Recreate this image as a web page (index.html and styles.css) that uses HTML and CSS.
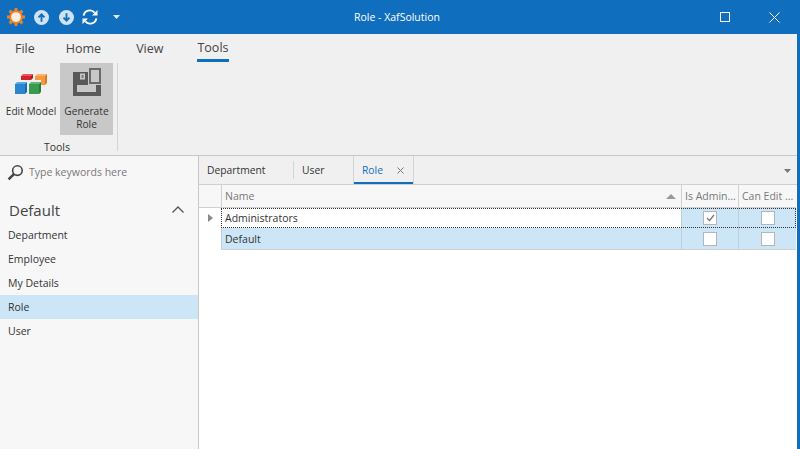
FILE: index.html
```html
<!DOCTYPE html>
<html lang="en">
<head>
<meta charset="utf-8">
<title>Role - XafSolution</title>
<link rel="stylesheet" href="styles.css">
</head>
<body>
<div class="window">
  <header class="titlebar">
    <div class="qat">
      <svg class="ic-app" width="18" height="18" viewBox="0 0 24 24"><g fill="#e9832a"><circle cx="12" cy="12" r="9"/><rect x="10" y="0" width="4" height="24"/><rect x="0" y="10" width="24" height="4"/><rect x="10" y="0" width="4" height="24" transform="rotate(45 12 12)"/><rect x="10" y="0" width="4" height="24" transform="rotate(-45 12 12)"/></g><circle cx="12" cy="12" r="6.500" fill="#fdeedd"/></svg>
      <svg class="ic-up" width="15" height="15" viewBox="0 0 16 16"><circle cx="8" cy="8" r="8" fill="#cfe3f5"/><path d="M8 12.500V5M4.800 7.800 8 4.600l3.200 3.200" fill="none" stroke="#106ebe" stroke-width="2"/></svg>
      <svg class="ic-down" width="15" height="15" viewBox="0 0 16 16"><circle cx="8" cy="8" r="8" fill="#cfe3f5"/><path d="M8 3.500V11M4.800 8.200 8 11.400l3.200-3.200" fill="none" stroke="#106ebe" stroke-width="2"/></svg>
      <svg class="ic-sync" width="16" height="16" viewBox="0 0 16 16"><path d="M1.600 6.600A6.300 6.300 0 0 1 12.600 3.600M14.400 9.400A6.300 6.300 0 0 1 3.400 12.400" fill="none" stroke="#fff" stroke-width="1.900"/><path d="M15.500 1v5.500H10zM.5 15V9.500H6z" fill="#fff"/></svg>
      <svg class="ic-drop" width="7" height="4" viewBox="0 0 7 4"><path d="M0 0h7L3.500 4z" fill="#dcebf8"/></svg>
    </div>
    <div class="title">Role - XafSolution</div>
    <div class="winbtns">
      <svg width="10" height="10" viewBox="0 0 10 10"><rect x=".5" y=".5" width="9" height="9" fill="none" stroke="#fff"/></svg>
      <svg width="11" height="11" viewBox="0 0 11 11"><path d="M.5.5l10 10M10.500.5l-10 10" stroke="#fff" fill="none"/></svg>
    </div>
  </header>
  <nav class="tabs">
    <span class="tab tab-file">File</span>
    <span class="tab tab-home">Home</span>
    <span class="tab tab-view">View</span>
    <span class="tab tab-tools">Tools</span>
  </nav>
  <section class="ribbon">
    <div class="group">
      <div class="group-items">
        <div class="rbtn rbtn-edit">
          <svg width="33" height="22" viewBox="0 0 33 22">
            <path d="M6 3l2-2h10l-2 2z" fill="#e8565c"/><path d="M6 3h10v4H6z" fill="#d2232c"/><path d="M16 3l2-2v4l-2 2z" fill="#a31a22"/>
            <path d="M20 3l2-2h10l-2 2z" fill="#f9b56c"/><path d="M20 3h10v9h-4V7h-6z" fill="#f4993f"/><path d="M30 3l2-2v9l-2 2z" fill="#d97c22"/>
            <path d="M0 11l2-2h10l-2 2z" fill="#55aae6"/><path d="M0 11h10v10H0z" fill="#2a86d0"/><path d="M10 11l2-2v10l-2 2z" fill="#1a6bae"/>
            <path d="M14 11l2-2h10l-2 2z" fill="#62b477"/><path d="M14 11h10v10H14z" fill="#3a9a50"/><path d="M24 11l2-2v10l-2 2z" fill="#2a7a3e"/>
          </svg>
          <span class="rlabel">Edit Model</span>
        </div>
        <div class="rbtn rbtn-gen">
          <svg width="28" height="28" viewBox="0 0 28 28">
            <path d="M0 4H15V17H4V24H23V17H28V28H0Z" fill="#595959"/>
            <rect x="7" y="5.500" width="5" height="6" fill="#c8c8c8"/>
            <rect x="8.500" y="7" width="2" height="3" fill="#7a7a7a"/>
            <rect x="17" y="1" width="10" height="14" fill="none" stroke="#6a6a6a" stroke-width="2"/>
          </svg>
          <span class="rlabel">Generate<br>Role</span>
        </div>
      </div>
      <div class="group-title">Tools</div>
    </div>
  </section>
  <main class="body">
    <aside class="side">
      <div class="search">
        <svg width="17" height="17" viewBox="0 0 16 16"><circle cx="9.800" cy="6.200" r="4.500" fill="none" stroke="#444" stroke-width="1.500"/><path d="M6.500 9.500 1.500 14.500" stroke="#444" stroke-width="2.400"/></svg>
        <span>Type keywords here</span>
      </div>
      <div class="navhead">
        <span>Default</span>
        <svg width="12" height="7" viewBox="0 0 12 7"><path d="M.5 6.500 6 1l5.500 5.500" fill="none" stroke="#555" stroke-width="1.300"/></svg>
      </div>
      <ul class="navlist">
        <li>Department</li>
        <li>Employee</li>
        <li>My Details</li>
        <li class="sel">Role</li>
        <li>User</li>
      </ul>
    </aside>
    <section class="content">
      <div class="doctabs">
        <span class="dt dt-dep">Department</span>
        <span class="dt dt-user">User</span>
        <span class="dt dt-role">Role<svg width="7" height="7" viewBox="0 0 7 7"><path d="M.5.5l6 6M6.500.5l-6 6" stroke="#777" fill="none"/></svg></span>
        <svg class="dt-more" width="7" height="4" viewBox="0 0 7 4"><path d="M0 0h7L3.500 4z" fill="#777"/></svg>
      </div>
      <div class="grid">
        <div class="row head">
          <div class="ind"></div>
          <div class="cells">
            <div class="c name">Name<svg width="10" height="5" viewBox="0 0 10 5"><path d="M0 5h10L5 0z" fill="#999"/></svg></div>
            <div class="c adm">Is Admin...</div>
            <div class="c edit">Can Edit ...</div>
          </div>
        </div>
        <div class="row r1">
          <div class="ind"><svg width="5" height="8" viewBox="0 0 5 8"><path d="M0 0l5 4-5 4z" fill="#8a8a8a"/></svg></div>
          <div class="cells">
            <div class="c name">Administrators</div>
            <div class="c adm"><span class="cb"><svg width="9" height="8" viewBox="0 0 9 8"><path d="M1 4l2.500 2.500L8 1" fill="none" stroke="#777" stroke-width="1.200"/></svg></span></div>
            <div class="c edit"><span class="cb"></span></div>
          </div>
        </div>
        <div class="row r2">
          <div class="ind"></div>
          <div class="cells">
            <div class="c name">Default</div>
            <div class="c adm"><span class="cb"></span></div>
            <div class="c edit"><span class="cb"></span></div>
          </div>
        </div>
      </div>
    </section>
  </main>
</div>
</body>
</html>
```
FILE: styles.css
```css
* { box-sizing: border-box; }
html, body { margin: 0; padding: 0; height: 100%; overflow: hidden; }
body { font-family: "Open Sans", "Liberation Sans", sans-serif; font-size: 10.5px; color: #333; }
.window { width: 800px; height: 449px; display: flex; flex-direction: column; background: #106ebe; }
.titlebar { height: 34px; flex: none; background: #106ebe; display: flex; align-items: center; position: relative; color: #fff; }
.qat { display: flex; align-items: center; padding-left: 7px; }
.ic-up { margin-left: 9px; }
.ic-down { margin-left: 10px; }
.ic-sync { margin-left: 8px; }
.ic-drop { margin-left: 15px; }
.title { position: absolute; left: 0; right: 6px; text-align: center; }
.winbtns { margin-left: auto; display: flex; align-items: center; gap: 39px; padding-right: 20px; }
.tabs { height: 28px; flex: none; margin-right: 3px; display: flex; align-items: center; font-size: 12.5px; color: #444; background: #f0f0f0; }
.tab { display: block; }
.tab-file { margin-left: 15px; }
.tab-home { margin-left: 31px; }
.tab-view { margin-left: 35px; }
.tab-tools { margin-left: 34px; height: 27px; line-height: 25px; border-bottom: 3px solid #106ebe; }
.ribbon { height: 94px; flex: none; margin-right: 3px; background: #f0f0f0; border-bottom: 1px solid #c8c8c8; padding-top: 1px; }
.group { width: 118px; height: 88px; border-right: 1px solid #d4d4d4; display: flex; flex-direction: column; }
.group-items { display: flex; gap: 1px; height: 72px; padding-left: 3px; }
.rbtn { display: flex; flex-direction: column; align-items: center; height: 72px; text-align: center; line-height: 13px; flex: none; font-size: 10.2px; }
.rbtn-edit { width: 56px; padding-top: 10px; }
.rbtn-gen { width: 53px; background: #c8c8c8; padding-top: 5px; }
.rlabel { display: block; white-space: nowrap; }
.rbtn-edit .rlabel { margin-top: 10px; }
.rbtn-gen .rlabel { margin-top: 9px; }
.group-title { text-align: center; line-height: 14px; margin-top: 5px; padding-right: 3px; }
.body { flex: 1; display: flex; min-height: 0; margin-right: 3px; background: #fff; }
.side { width: 199px; flex: none; background: #f7f7f7; border-right: 1px solid #c8c8c8; }
.search { height: 32px; display: flex; align-items: center; gap: 5px; padding-left: 7px; color: #777; }
.navhead { height: 35px; display: flex; align-items: center; justify-content: space-between; padding: 8px 14px 0 9px; font-size: 15px; color: #444; }
.navlist { list-style: none; margin: 0; padding: 0; }
.navlist li { height: 24px; line-height: 24px; padding-left: 8px; }
.navlist li.sel { background: #cde6f7; }
.content { flex: 1; min-width: 0; }
.doctabs { height: 29px; background: #f0f0f0; border-bottom: 1px solid #d0d0d0; display: flex; align-items: center; position: relative; font-size: 10.3px; }
.dt { display: flex; align-items: center; height: 28px; flex: none; }
.dt-dep { width: 94px; padding-left: 8px; }
.dt-user { width: 60px; padding-left: 8px; border-left: 1px solid #d4d4d4; height: 18px; }
.dt-role { width: 61px; padding-left: 9px; color: #106ebe; gap: 14px; height: 28px; box-shadow: inset 1px 0 0 #d4d4d4, inset -1px 0 0 #d4d4d4, inset 0 -2px 0 #106ebe; }
.dt-more { position: absolute; right: 6px; top: 13px; }
.grid { display: flex; flex-direction: column; padding-right: 1px; }
.row { display: flex; height: 20px; }
.row.head { height: 23px; background: #f7f7f7; border-bottom: 1px solid #d0d0d0; color: #777; }
.ind { width: 22px; flex: none; display: flex; align-items: center; padding-left: 9px; }
.cells { flex: 1; min-width: 0; display: flex; }
.c { display: flex; align-items: center; padding-left: 3px; border-left: 1px solid #d0d0d0; white-space: nowrap; overflow: hidden; }
.c.name { flex: 1; min-width: 0; justify-content: space-between; padding-right: 5px; }
.c.adm { width: 57px; flex: none; }
.c.edit { width: 58px; flex: none; }
.r1 .c.adm, .r1 .c.edit, .r2 .c { background: #cde6f7; border-left-color: #bdd0dd; }
.r1 .adm, .r1 .edit, .r2 .adm, .r2 .edit { justify-content: center; padding-left: 0; }
.r1 .cells { outline: 1px dotted #333; outline-offset: -1px; }
.r1 .c.name { border-left-color: transparent; }
.cb { display: flex; align-items: center; justify-content: center; width: 14px; height: 14px; background: #fff; border: 1px solid #b5b5b5; }
.r2 { height: 22px; }
.r2 .cells { border-bottom: 1px solid #d0d0d0; }
```
